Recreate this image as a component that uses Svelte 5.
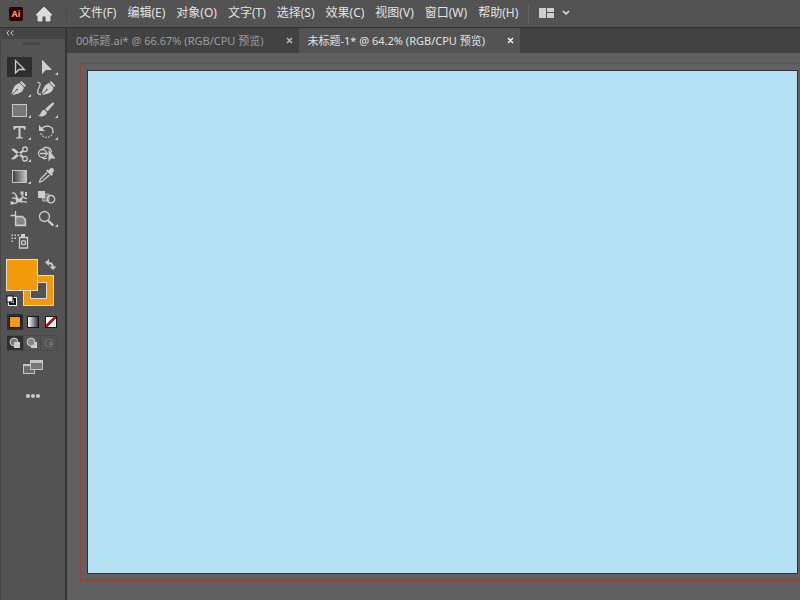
<script>
  const menus = [
    '文件(F)', '编辑(E)', '对象(O)', '文字(T)', '选择(S)',
    '效果(C)', '视图(V)', '窗口(W)', '帮助(H)'
  ];

  const tabs = [
    {title: '00标题.ai* @ 66.67% (RGB/CPU 预览)'},
    {title: '未标题-1* @ 64.2% (RGB/CPU 预览)'}
  ];

  // line: stroked path, fill: solid path, more: has a flyout corner
  const tools = [
    {name: '选择工具', line: 'M9.500 4.500V17L13 13.500H18.500Z'},
    {name: '直接选择工具', more: true, fill: 'M9 3.500V18L13 14H19Z'},
    {name: '钢笔工具', more: true, fill: 'M15.500 3L20 7.500L18.500 9L14 4.500ZM13.500 5L18 9.500Q17 14 12.500 15.500L7 17L6.500 16.500L10.500 12.500Q12.500 12.500 12 11Q10.500 10 10 12L6 16L5.500 15.500L7.500 10Q9 6.500 13.500 5Z'},
    {name: '曲率工具', fill: 'M18 3L22.500 7.500L21 9L16.500 4.500ZM16 5L20.500 9.500Q20 13.500 15.500 15.500L10 17L9.500 16.500L13.500 12.500Q15.500 12 14.500 11Q13 10 13 12L9 16L8.500 15.500L10.500 10Q12 6.500 16 5Z', line: 'M4.500 4.500C8 4 7.500 7 6 9.500C4 13 4 16.500 8 16.500'},
    {name: '矩形工具', more: true, box: '#787878'},
    {name: '画笔工具', more: true, fill: 'M20.500 3.500Q21.500 4 21 5L14.500 12.500L12 10L19.500 3.500ZM11 10.500L14 13.500C13 17.500 8.500 18 5 17C8 16 7.500 12 11 10.500Z'},
    {name: '文字工具', more: true, fill: 'M7.500 5H19.500V9H18.500Q18 6.500 14.500 6.500V15.500Q14.500 16.500 17 16.500V17.500H10V16.500Q12.500 16.500 12.500 15.500V6.500Q9 6.500 8.500 9H7.500Z'},
    {name: '旋转工具', more: true, line: 'M9 7.500C13 3 20.500 5 20 11', dash: 'M20 11C19 17.500 10 18.500 7.500 12', fill: 'M6 4V10H12Z'},
    {name: '剪刀工具', more: true, line: 'M19 4a2.300 2.300 0 1 0 0 4.600a2.300 2.300 0 1 0 0 -4.600M19 13.400a2.300 2.300 0 1 0 0 4.600a2.300 2.300 0 1 0 0 -4.600', fill: 'M5 6Q7.500 5 9.500 6.500L18 13.500L16.500 15L10.500 11ZM5 16Q7.500 17 9.500 15.500L18 8.500L16.500 7L10.500 11Z'},
    {name: '形状生成器工具', line: 'M9.500 6.500a4 4 0 1 0 0 8a4 4 0 1 0 0 -8M9 7C11 3 18 3.500 18.500 9.500M9 14C10 16 12 16 14 15M7 10.500H15', fill: 'M15.500 6.500V18.500L18 15.500H22.500Z'},
    {name: '渐变工具', more: true, box: 'url(#fade)'},
    {name: '吸管工具', fill: 'M17 3.500Q20 2 21 4.500Q21.500 6 19 8.500L20 9.500L18.500 11L13 5.500L14.500 4.500L15.500 5.500Z', line: 'M14 7.500L7.500 14L6.500 17L9.500 16L16.500 10'},
    {name: '操控变形工具', line: 'M6 6.500C9 4.500 10 8 11 10.500M16 6C16 10 18 11.500 21 11.500M6 11.500C9 9.500 10 12 12 14C14 16 18 13.500 21 15.500M6 16C9 17 12 16 13 12', fill: 'M14.500 4.500h3v3h-3ZM9.500 8L13 12L17 9L16 14L10 15ZM4.500 14.500h3v3h-3ZM19 5h2v4h-2Z'},
    {name: '混合工具', fill: 'M5 4H12V11H5Z', mid: 'M9.500 7H16V14H9.500Z', line: 'M18 8.500a3.700 3.700 0 1 0 0 7.400a3.700 3.700 0 1 0 0 -7.400'},
    {name: '画板工具', line: 'M9.500 3V8M4.500 7.500H9M9.500 8.500H16.500L19.500 11.500V17.500H9.500Z', mid: 'M10 9H16L19 12V17H10Z'},
    {name: '缩放工具', more: true, line: 'M11.500 3.500a5 5 0 1 0 0 10a5 5 0 1 0 0 -10', fill: 'M14.500 13.500L16 12L21 16.500L19.500 18.500Z'},
    {name: '符号喷枪工具', fill: 'M15 4H19V7H15ZM5.500 4.500h1.500v1.500h-1.500ZM8.500 4.500h1.500v1.500h-1.500ZM5.500 7.500h1.500v1.500h-1.500ZM8.500 7.500h1.500v1.500h-1.500ZM11.500 4.500h1.500v1.500h-1.500ZM5.500 10.500h1.500v1.500h-1.500Z', line: 'M13.500 7.500H21.500V18H13.500ZM17.500 10.700a2 2 0 1 0 0 4a2 2 0 1 0 0 -4'}
  ];

  let activeTool = $state('选择工具');
  let activeTab = $state(1);
</script>

<div class="app">
  <header>
    <span class="logo">Ai</span>
    <button class="home" aria-label="主页">
      <svg width="18" height="16" viewBox="0 0 18 16"><path d="M9 1L17 9H15V15H11V10H7V15H3V9H1Z" fill="#dcdcdc" stroke="#dcdcdc" stroke-linejoin="round" /></svg>
    </button>
    <nav>
      {#each menus as menu}
        <button>{menu}</button>
      {/each}
    </nav>
    <button class="workspace" aria-label="工作区">
      <svg width="32" height="12" viewBox="0 0 32 12">
        <path d="M0 1H7V11H0ZM8 1H15V5H8ZM8 6H15V11H8Z" fill="#cfcfcf" />
        <path d="M24 4L27 7L30 4" fill="none" stroke="#e6e6e6" stroke-width="1.500" />
      </svg>
    </button>
  </header>

  <div class="body">
    <aside>
      <button class="collapse" aria-label="折叠">
        <svg width="8" height="6" viewBox="0 0 8 6"><path d="M3 .5L1 3L3 5.500M7 .5L5 3L7 5.500" fill="none" stroke="#d0d0d0" /></svg>
      </button>
      <div class="grip"></div>

      <div class="tools">
        {#each tools as tool}
          <button class:active={tool.name === activeTool} aria-label={tool.name} onclick={() => (activeTool = tool.name)}>
            <svg width="27" height="22" viewBox="0 0 27 22">
              {#if tool.box}
                <defs>
                  <linearGradient id="fade"><stop stop-color="#3c3c3c" /><stop offset="1" stop-color="#c8c8c8" /></linearGradient>
                </defs>
                <rect x="6.500" y="5.500" width="14" height="12" fill={tool.box} stroke="#c4c4c4" />
              {/if}
              {#if tool.mid}<path class="mid" d={tool.mid} />{/if}
              {#if tool.fill}<path class="solid" d={tool.fill} />{/if}
              {#if tool.line}<path class="line" d={tool.line} />{/if}
              {#if tool.dash}<path class="line dash" d={tool.dash} />{/if}
              {#if tool.more}<path class="solid" d="M25 16V19H22Z" />{/if}
            </svg>
          </button>
        {/each}
      </div>

      <button class="colors" aria-label="填色和描边">
        <svg width="54" height="50" viewBox="0 0 54 50">
          <path d="M17.500 17.500H47.500V47.500H17.500ZM24.500 24.500V40.500H40.500V24.500Z" fill="#f39a0a" fill-rule="evenodd" stroke="#e4dccb" />
          <rect x=".5" y="1.500" width="31" height="31" fill="#f39a0a" stroke="#e4dccb" />
          <path d="M42 5Q47 4.500 47 10" fill="none" stroke="#c8c8c8" stroke-width="2" />
          <path d="M43 1V8L39 4.500ZM43.500 8.500H50.500L47 12Z" fill="#c8c8c8" />
          <rect x="4" y="41" width="5" height="5" fill="none" stroke="#fff" stroke-width="4" />
          <rect x="4" y="41" width="5" height="5" fill="none" stroke="#111" stroke-width="2" />
          <rect x="1" y="38" width="6" height="6" fill="#fff" stroke="#111" />
        </svg>
      </button>

      <div class="swatches">
        <button class="chosen" aria-label="颜色"><span class="orange"></span></button>
        <button aria-label="渐变"><span class="fade"></span></button>
        <button aria-label="无"><span class="none"></span></button>
      </div>

      <div class="modes">
        <button class="chosen" aria-label="正常绘图">
          <svg width="12" height="12" viewBox="0 0 12 12"><circle cx="5" cy="5" r="4" fill="#777" stroke="#ccc" /><rect x="5" y="5" width="6" height="6" fill="#ccc" /></svg>
        </button>
        <button aria-label="背面绘图">
          <svg width="12" height="12" viewBox="0 0 12 12"><rect x="5" y="5" width="6" height="6" fill="#ccc" /><circle cx="5" cy="5" r="4" fill="#888" stroke="#ccc" /></svg>
        </button>
        <button aria-label="内部绘图">
          <svg width="12" height="12" viewBox="0 0 12 12"><circle cx="6" cy="6" r="4" fill="none" stroke="#707070" /><rect x="6" y="5" width="3" height="3" fill="#707070" /></svg>
        </button>
      </div>

      <button class="screen" aria-label="更改屏幕模式">
        <svg width="20" height="16" viewBox="0 0 20 16">
          <rect x=".5" y="5.500" width="11" height="9" fill="#6c6c6c" stroke="#c4c4c4" />
          <path d="M0 5H12V7H0Z" fill="#c4c4c4" />
          <rect x="7.500" y="1.500" width="12" height="9" fill="#777" stroke="#c4c4c4" />
          <path d="M7 1H20V4H7Z" fill="#c4c4c4" />
        </svg>
      </button>
      <button class="dots" aria-label="编辑工具栏">
        <svg width="14" height="4" viewBox="0 0 14 4"><circle cx="2" cy="2" r="2" /><circle cx="7" cy="2" r="2" /><circle cx="12" cy="2" r="2" /></svg>
      </button>
    </aside>

    <main>
      <div class="tabs">
        {#each tabs as tab, i}
          <div class="tab" class:current={i === activeTab}>
            <button class="title" onclick={() => (activeTab = i)}>{tab.title}</button>
            <button class="close" aria-label="关闭">
              <svg width="7" height="7" viewBox="0 0 7 7"><path d="M1 1L6 6M6 1L1 6" fill="none" stroke="currentColor" stroke-width="1.300" /></svg>
            </button>
          </div>
        {/each}
      </div>
      <div class="canvas">
        <div class="bleed">
          <div class="artboard"></div>
        </div>
      </div>
    </main>
  </div>
</div>

<style>
  :global(body) {
    background: #535353;
  }

  .app {
    display: flex;
    flex-direction: column;
    height: 100vh;
    overflow: hidden;
    background: #535353;
    color: #e2e2e2;
    font-family: "Noto Sans", "Noto Sans CJK SC", sans-serif;
    font-size: 12px;
  }

  button {
    margin: 0;
    padding: 0;
    border: none;
    background: none;
    color: inherit;
    font: inherit;
    white-space: nowrap;
  }

  svg {
    display: block;
  }

  header {
    display: flex;
    align-items: center;
    flex: none;
    height: 27px;
    padding-left: 9px;
    border-bottom: 1px solid #333;
  }

  .logo {
    width: 14px;
    border-radius: 2px;
    background: #320000;
    color: #ff9a66;
    font-size: 9px;
    font-weight: bold;
    line-height: 14px;
    text-align: center;
  }

  .home {
    margin-left: 12px;
    padding-right: 13px;
    border-right: 1px solid #4b4b4b;
  }

  nav {
    display: flex;
    gap: 11px;
    padding: 0 10px 2px 12px;
    border-right: 1px solid #626262;
    line-height: 18px;
  }

  .workspace {
    margin-left: 10px;
    padding-bottom: 2px;
  }

  .body {
    display: flex;
    flex: 1;
    min-height: 0;
  }

  aside {
    display: flex;
    flex-direction: column;
    flex: none;
    width: 64px;
    border-left: 1px solid #484848;
    border-right: 2px solid #353535;
  }

  .collapse {
    display: flex;
    align-items: center;
    height: 11px;
    padding: 0 0 2px 5px;
    background: #454545;
  }

  .grip {
    width: 18px;
    height: 3px;
    margin: 3px auto 0 22px;
    background: repeating-linear-gradient(90deg, #444 0 1px, #4d4d4d 1px 2px);
  }

  .tools {
    display: grid;
    grid-template-columns: 27px 27px;
    grid-template-rows: repeat(9, minmax(0, 1fr));
    height: 196px;
    margin: 11px 0 0 5px;
  }

  .tools button {
    display: flex;
    align-items: center;
    min-height: 0;
  }

  .tools .active {
    background: linear-gradient(#2e2e2e, #2e2e2e) center / 25px 20px no-repeat;
  }

  .solid {
    fill: #cdcdcd;
  }

  .mid {
    fill: #858585;
    stroke: #aaa;
  }

  .line {
    fill: none;
    stroke: #cdcdcd;
    stroke-width: 1.3;
  }

  .dash {
    stroke-dasharray: 1.5 1.5;
  }

  .colors {
    align-self: flex-start;
    margin: 6px 0 0 5px;
  }

  .swatches,
  .modes {
    display: flex;
    margin-left: 6px;
  }

  .swatches {
    gap: 2px;
    margin-top: 6px;
  }

  .swatches button {
    padding: 2px;
  }

  .swatches span {
    display: block;
    width: 10px;
    height: 10px;
    border: 1px solid #151515;
  }

  .chosen {
    background: #2e2e2e;
  }

  .orange {
    background: #f99b08;
  }

  .fade {
    background: linear-gradient(90deg, #fff, #333);
  }

  .none {
    background: linear-gradient(135deg, #fff 40%, #c3161c 40% 60%, #fff 60%);
  }

  .modes {
    margin-top: 5px;
  }

  .modes button {
    display: flex;
    align-items: center;
    justify-content: center;
    width: 17px;
    height: 16px;
    border: 1px solid #4a4a4a;
    border-left: none;
  }

  .screen {
    align-self: flex-start;
    margin: 8px 0 0 22px;
  }

  .dots {
    align-self: flex-start;
    margin: 19px 0 0 25px;
    fill: #cdcdcd;
  }

  main {
    display: flex;
    flex-direction: column;
    flex: 1;
    min-width: 0;
  }

  .tabs {
    display: flex;
    flex: none;
    height: 25px;
    background: #424242;
    font-size: 11px;
  }

  .tab {
    display: flex;
    align-items: center;
    gap: 22px;
    padding: 0 6px 0 9px;
    color: #9d9d9d;
  }

  .title {
    padding-bottom: 2px;
  }

  .tab .close {
    color: #c4c4c4;
  }

  .current {
    background: #535353;
    color: #e2e2e2;
  }

  .current .close {
    color: #fff;
  }

  .canvas {
    display: flex;
    flex: 1;
    padding: 10px 0 19px 13px;
    background: #606060;
  }

  .bleed {
    display: flex;
    flex: 1;
    padding: 6px 2px 6px 6px;
    border: 1px solid #96403c;
    border-right: none;
  }

  .artboard {
    flex: 1;
    border: 1px solid #26343c;
    background: #b6e0f4;
  }
</style>
